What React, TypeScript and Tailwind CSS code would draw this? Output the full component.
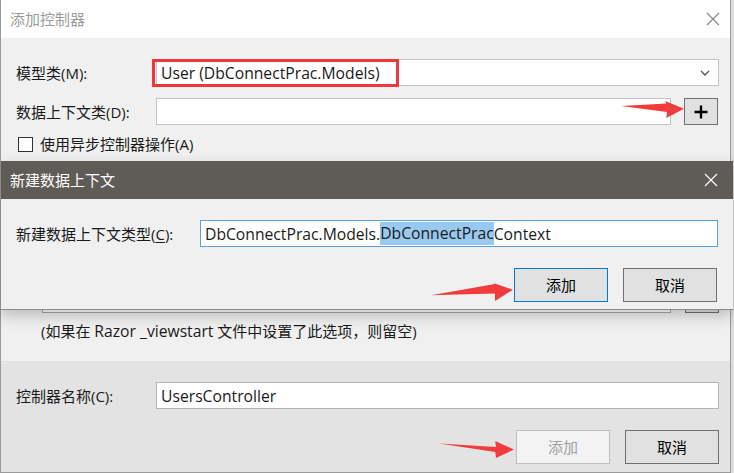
import React from "react";

const FONT = "font-['Open_Sans','Noto_Sans_CJK_SC',sans-serif]";

function Arrow({ className, d }: { className: string; d: string }) {
  return (
    <svg className={`absolute ${className}`} viewBox="0 0 100 20" preserveAspectRatio="none">
      <polygon points={d} fill="#f03c3c" />
    </svg>
  );
}

function CloseIcon({ color }: { color: string }) {
  return (
    <svg width="14" height="14" viewBox="0 0 14 14">
      <path d="M1 1 L13 13 M13 1 L1 13" stroke={color} strokeWidth="1.2" fill="none" />
    </svg>
  );
}

export default function App() {
  return (
    <div className={`relative h-[473px] w-[734px] overflow-hidden bg-[#dcdcdc] text-[15px] text-[#1a1a1a] ${FONT}`}>
      {/* outer dialog: 添加控制器 */}
      <div className="flex h-full w-[731px] flex-col border-b border-l border-r border-[#9a9a9a]">
        <div className="flex h-[38px] shrink-0 items-center justify-between bg-white pl-[9px] pr-[10px]">
          <span className="text-[#9a9a9a]">添加控制器</span>
          <CloseIcon color="#8a8a8a" />
        </div>

        <div className="flex flex-col bg-[#f0f0f0] pl-[15px] pr-[11px] pt-[21px]">
          <div className="flex items-center">
            <span className="w-[140px] leading-[20px]">模型类(M):</span>
            <div className="relative flex h-[27px] flex-1 items-center justify-between border border-[#c4c4c4] bg-white pl-[4px] pr-[8px]">
              <span className="text-[15.7px] leading-[20px]">User (DbConnectPrac.Models)</span>
              <div className="absolute -left-[5px] -top-[1px] h-[28px] w-[247px] border-[3px] border-[#f0373c]" />
              <svg width="10" height="6" viewBox="0 0 10 6">
                <polyline points="1,1 5,5 9,1" stroke="#555" strokeWidth="1.3" fill="none" />
              </svg>
            </div>
          </div>

          <div className="mt-[12px] flex items-center">
            <span className="w-[140px] leading-[20px]">数据上下文类(D):</span>
            <div className="h-[27px] w-[515px] border border-[#c4c4c4] bg-white" />
            <button className="ml-[13px] flex h-[27px] w-[34px] items-center justify-center border border-[#707070] bg-[#e1e1e1]">
              <svg width="14" height="14" viewBox="0 0 14 14">
                <path d="M7 0.5 V13.5 M0.5 7 H13.5" stroke="#000" strokeWidth="2.4" fill="none" />
              </svg>
            </button>
          </div>

          <div className="mt-[12px] flex items-center">
            <div className="ml-[2px] h-[15px] w-[15px] border border-[#333] bg-white" />
            <span className="ml-[7px] leading-[15px]">使用异步控制器操作(A)</span>
          </div>

          {/* rows hidden beneath the child dialog */}
          <div className="mt-[134px] flex items-center pl-[26px]">
            <div className="h-[27px] w-[630px] border border-[#aaaaaa] bg-white" />
            <div className="ml-[14px] h-[27px] w-[34px] border border-[#707070] bg-[#e1e1e1]" />
          </div>
          <div className="mt-[8px] pl-[25px] leading-[20px]">
            (如果在 <span className="text-[15.7px]">Razor _viewstart</span> 文件中设置了此选项，则留空)
          </div>
          <div className="h-[20px]" />
        </div>

        <div className="flex flex-1 flex-col bg-[#e3e3e3] pl-[15px] pr-[11px] pt-[21px]">
          <div className="flex items-center">
            <span className="w-[140px] leading-[20px]">控制器名称(C):</span>
            <div className="flex h-[27px] flex-1 items-center border border-[#b4b4b4] bg-white pl-[4px]">
              <span className="text-[15.7px] leading-[20px]">UsersController</span>
            </div>
          </div>
          <div className="mt-[21px] flex justify-end gap-[15px]">
            <button className="h-[34px] w-[94px] border border-[#bfbfbf] bg-[#f3f3f3] text-[#a0a0a0]">添加</button>
            <button className="h-[34px] w-[94px] border border-[#707070] bg-[#e1e1e1] text-black">取消</button>
          </div>
        </div>
      </div>

      {/* child dialog: 新建数据上下文 */}
      <div className="absolute left-0 top-[161px] flex h-[149px] w-[733px] flex-col border-b border-l border-[#8c8c8c] bg-[#f0f0f0] shadow-[0_6px_14px_rgba(0,0,0,0.22)]">
        <div className="flex h-[38px] shrink-0 items-center justify-between bg-[#5f5b57] pl-[9px] pr-[15px]">
          <span className="text-white">新建数据上下文</span>
          <CloseIcon color="#ffffff" />
        </div>
        <div className="flex flex-col pl-[15px] pr-[15px] pt-[21px]">
          <div className="flex items-center">
            <span className="w-[184px] leading-[20px]">
              新建数据上下文类型(<span className="underline underline-offset-2">C</span>):
            </span>
            <div className="flex h-[27px] w-[518px] items-center border border-[#5d9fdc] bg-white pl-[4px] text-[15.7px]">
              <span className="leading-[20px]">DbConnectPrac.Models.</span>
              <span className="bg-[#99c9ef] leading-[23px]">DbConnectPrac</span>
              <span className="leading-[20px]">Context</span>
            </div>
          </div>
          <div className="mt-[21px] flex justify-end gap-[15px] pr-[1px]">
            <button className="h-[34px] w-[94px] border border-[#0078d7] bg-[#e1e1e1] text-black">添加</button>
            <button className="h-[34px] w-[94px] border border-[#707070] bg-[#e1e1e1] text-black">取消</button>
          </div>
        </div>
      </div>

      {/* red annotation arrows */}
      <Arrow className="left-[621px] top-[101px] h-[17px] w-[63px]" d="0,6 72,3 70,0 100,9 72,20 73,13" />
      <Arrow className="left-[431px] top-[283px] h-[19px] w-[82px]" d="0,13 78,1 76,0 100,7 78,19 78,11" />
      <Arrow className="left-[439px] top-[441px] h-[17px] w-[75px]" d="0,3 76,7 75,0 100,10 76,20 75,13" />
    </div>
  );
}
